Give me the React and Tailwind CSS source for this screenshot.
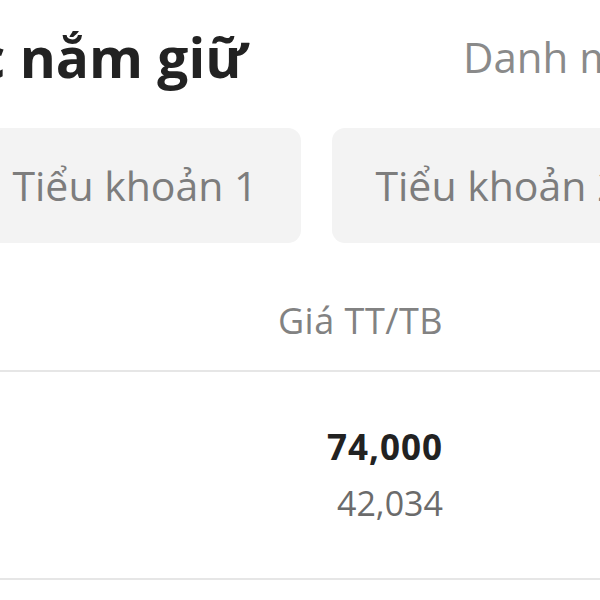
const FONT = { fontFamily: "'Open Sans', 'Noto Sans', sans-serif" };

export default function App() {
  return (
    <div className="w-[600px] h-[600px] overflow-hidden bg-white" style={FONT}>
      {/* Tabs */}
      <div className="flex items-end h-[84px] whitespace-nowrap">
        <div className="w-[247px] shrink-0 flex justify-end">
          <span className="text-[55px] leading-none font-bold text-[#222222]">
            Danh mục nắm giữ
          </span>
        </div>
        <span className="ml-[216px] mb-[6px] text-[42px] leading-none text-[#8a8a8a]">
          Danh mục theo dõi
        </span>
      </div>

      {/* Sub accounts */}
      <div className="flex gap-[31px] ml-[-31px] mt-[44px] whitespace-nowrap">
        <div className="w-[332px] h-[115px] shrink-0 rounded-[13px] bg-[#f3f3f3] flex items-center justify-center text-[41px] leading-none text-[#7d7d7d]">
          Tiểu khoản 1
        </div>
        <div className="w-[332px] h-[115px] shrink-0 rounded-[13px] bg-[#f3f3f3] flex items-center justify-center text-[41px] leading-none text-[#7d7d7d]">
          Tiểu khoản 2
        </div>
      </div>

      {/* Table header */}
      <div className="h-[129px] flex items-start justify-end pt-[60px] pr-[157px] border-b-2 border-[#e6e6e6]">
        <div className="text-[36px] leading-none tracking-[0.5px] text-[#828282]">Giá TT/TB</div>
      </div>

      {/* Holding row */}
      <div className="h-[208px] flex flex-col items-end pt-[57px] pr-[157px] border-b-2 border-[#e6e6e6]">
        <div className="text-[35px] leading-none font-bold tracking-[1px] text-[#222222]">74,000</div>
        <div className="mt-[22px] text-[34px] leading-none text-[#6b6b6b]">42,034</div>
      </div>
    </div>
  );
}
